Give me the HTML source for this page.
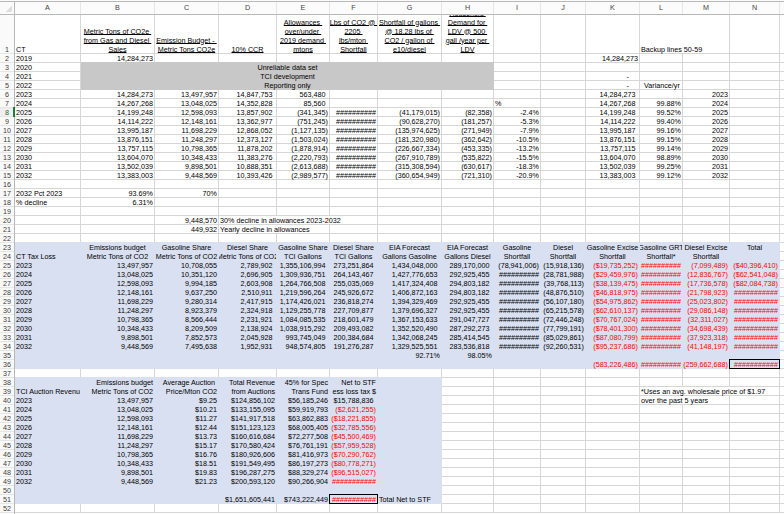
<!DOCTYPE html><html><head><meta charset="utf-8"><style>
html,body{margin:0;padding:0;background:#fff;width:784px;height:514px;overflow:hidden;position:relative}
body{font-family:"Liberation Sans",sans-serif;font-size:7.2px;color:#000}
.t{position:absolute;white-space:pre;line-height:9px;height:9px;display:flex;overflow:hidden;box-sizing:border-box}
.t span{flex:none}
.c{text-align:center}.r{text-align:right}.l{text-align:left}
.clip{overflow:hidden}
.red{color:#f00}
.u span{text-decoration:underline}
.h{position:absolute;color:#444;text-align:center;line-height:9px;white-space:pre}
.p{visibility:hidden}
.ul{text-decoration:underline;text-decoration-thickness:1px;text-underline-offset:0px}
svg{position:absolute;left:0;top:0}
</style></head><body>

<svg width="784" height="514" shape-rendering="crispEdges"><rect x="0" y="0" width="784" height="14" fill="#fbfbfb"/><rect x="0" y="0" width="14" height="514" fill="#fafafa"/><rect x="0" y="107" width="14" height="10" fill="#efefef"/><path d="M15 53.5H784M15 62.5H784M15 71.5H784M15 80.5H784M15 89.5H784M15 98.5H784M15 107.5H784M15 116.5H784M15 125.5H784M15 134.5H784M15 143.5H784M15 152.5H784M15 161.5H784M15 170.5H784M15 179.5H784M15 188.5H784M15 197.5H784M15 206.5H784M15 215.5H784M15 224.5H784M15 233.5H784M15 242.5H784M15 251.5H784M15 260.5H784M15 269.5H784M15 278.5H784M15 287.5H784M15 296.5H784M15 305.5H784M15 314.5H784M15 323.5H784M15 332.5H784M15 341.5H784M15 350.5H784M15 359.5H784M15 368.5H784M15 377.5H784M15 386.5H784M15 395.5H784M15 404.5H784M15 413.5H784M15 422.5H784M15 431.5H784M15 440.5H784M15 449.5H784M15 458.5H784M15 467.5H784M15 476.5H784M15 485.5H784M15 494.5H784M15 503.5H784M15 512.5H784M80.5 15V53M80.5 54V62M80.5 63V71M80.5 72V80M80.5 81V89M80.5 90V98M80.5 99V107M80.5 108V116M80.5 117V125M80.5 126V134M80.5 135V143M80.5 144V152M80.5 153V161M80.5 162V170M80.5 171V179M80.5 180V188M80.5 189V197M80.5 198V206M80.5 207V215M80.5 216V224M80.5 225V233M80.5 234V242M80.5 243V251M80.5 252V260M80.5 261V269M80.5 270V278M80.5 279V287M80.5 288V296M80.5 297V305M80.5 306V314M80.5 315V323M80.5 324V332M80.5 333V341M80.5 342V350M80.5 351V359M80.5 360V368M80.5 369V377M80.5 378V386M80.5 387V395M80.5 396V404M80.5 405V413M80.5 414V422M80.5 423V431M80.5 432V440M80.5 441V449M80.5 450V458M80.5 459V467M80.5 468V476M80.5 477V485M80.5 486V494M80.5 495V503M80.5 504V512M154.5 15V53M154.5 54V62M154.5 63V71M154.5 72V80M154.5 81V89M154.5 90V98M154.5 99V107M154.5 108V116M154.5 117V125M154.5 126V134M154.5 135V143M154.5 144V152M154.5 153V161M154.5 162V170M154.5 171V179M154.5 180V188M154.5 189V197M154.5 198V206M154.5 207V215M154.5 216V224M154.5 225V233M154.5 234V242M154.5 243V251M154.5 252V260M154.5 261V269M154.5 270V278M154.5 279V287M154.5 288V296M154.5 297V305M154.5 306V314M154.5 315V323M154.5 324V332M154.5 333V341M154.5 342V350M154.5 351V359M154.5 360V368M154.5 369V377M154.5 378V386M154.5 387V395M154.5 396V404M154.5 405V413M154.5 414V422M154.5 423V431M154.5 432V440M154.5 441V449M154.5 450V458M154.5 459V467M154.5 468V476M154.5 477V485M154.5 486V494M154.5 495V503M154.5 504V512M218.5 15V53M218.5 54V62M218.5 63V71M218.5 72V80M218.5 81V89M218.5 90V98M218.5 99V107M218.5 108V116M218.5 117V125M218.5 126V134M218.5 135V143M218.5 144V152M218.5 153V161M218.5 162V170M218.5 171V179M218.5 180V188M218.5 189V197M218.5 198V206M218.5 207V215M218.5 216V224M218.5 225V233M218.5 234V242M218.5 243V251M218.5 252V260M218.5 261V269M218.5 270V278M218.5 279V287M218.5 288V296M218.5 297V305M218.5 306V314M218.5 315V323M218.5 324V332M218.5 333V341M218.5 342V350M218.5 351V359M218.5 360V368M218.5 369V377M218.5 378V386M218.5 387V395M218.5 396V404M218.5 405V413M218.5 414V422M218.5 423V431M218.5 432V440M218.5 441V449M218.5 450V458M218.5 459V467M218.5 468V476M218.5 477V485M218.5 486V494M218.5 495V503M218.5 504V512M276.5 15V53M276.5 54V62M276.5 63V71M276.5 72V80M276.5 81V89M276.5 90V98M276.5 99V107M276.5 108V116M276.5 117V125M276.5 126V134M276.5 135V143M276.5 144V152M276.5 153V161M276.5 162V170M276.5 171V179M276.5 180V188M276.5 189V197M276.5 198V206M276.5 207V215M276.5 234V242M276.5 243V251M276.5 252V260M276.5 261V269M276.5 270V278M276.5 279V287M276.5 288V296M276.5 297V305M276.5 306V314M276.5 315V323M276.5 324V332M276.5 333V341M276.5 342V350M276.5 351V359M276.5 360V368M276.5 369V377M276.5 378V386M276.5 387V395M276.5 396V404M276.5 405V413M276.5 414V422M276.5 423V431M276.5 432V440M276.5 441V449M276.5 450V458M276.5 459V467M276.5 468V476M276.5 477V485M276.5 486V494M276.5 495V503M276.5 504V512M329.5 15V53M329.5 54V62M329.5 63V71M329.5 72V80M329.5 81V89M329.5 90V98M329.5 99V107M329.5 108V116M329.5 117V125M329.5 126V134M329.5 135V143M329.5 144V152M329.5 153V161M329.5 162V170M329.5 171V179M329.5 180V188M329.5 189V197M329.5 198V206M329.5 207V215M329.5 225V233M329.5 234V242M329.5 243V251M329.5 252V260M329.5 261V269M329.5 270V278M329.5 279V287M329.5 288V296M329.5 297V305M329.5 306V314M329.5 315V323M329.5 324V332M329.5 333V341M329.5 342V350M329.5 351V359M329.5 360V368M329.5 369V377M329.5 378V386M329.5 387V395M329.5 396V404M329.5 405V413M329.5 414V422M329.5 423V431M329.5 432V440M329.5 441V449M329.5 450V458M329.5 459V467M329.5 468V476M329.5 477V485M329.5 486V494M329.5 495V503M329.5 504V512M377.5 15V53M377.5 54V62M377.5 63V71M377.5 72V80M377.5 81V89M377.5 90V98M377.5 99V107M377.5 108V116M377.5 117V125M377.5 126V134M377.5 135V143M377.5 144V152M377.5 153V161M377.5 162V170M377.5 171V179M377.5 180V188M377.5 189V197M377.5 198V206M377.5 207V215M377.5 216V224M377.5 225V233M377.5 234V242M377.5 243V251M377.5 252V260M377.5 261V269M377.5 270V278M377.5 279V287M377.5 288V296M377.5 297V305M377.5 306V314M377.5 315V323M377.5 324V332M377.5 333V341M377.5 342V350M377.5 351V359M377.5 360V368M377.5 369V377M377.5 378V386M377.5 387V395M377.5 396V404M377.5 405V413M377.5 414V422M377.5 423V431M377.5 432V440M377.5 441V449M377.5 450V458M377.5 459V467M377.5 468V476M377.5 477V485M377.5 486V494M377.5 495V503M377.5 504V512M441.5 15V53M441.5 54V62M441.5 63V71M441.5 72V80M441.5 81V89M441.5 90V98M441.5 99V107M441.5 108V116M441.5 117V125M441.5 126V134M441.5 135V143M441.5 144V152M441.5 153V161M441.5 162V170M441.5 171V179M441.5 180V188M441.5 189V197M441.5 198V206M441.5 207V215M441.5 216V224M441.5 225V233M441.5 234V242M441.5 243V251M441.5 252V260M441.5 261V269M441.5 270V278M441.5 279V287M441.5 288V296M441.5 297V305M441.5 306V314M441.5 315V323M441.5 324V332M441.5 333V341M441.5 342V350M441.5 351V359M441.5 360V368M441.5 369V377M441.5 378V386M441.5 387V395M441.5 396V404M441.5 405V413M441.5 414V422M441.5 423V431M441.5 432V440M441.5 441V449M441.5 450V458M441.5 459V467M441.5 468V476M441.5 477V485M441.5 486V494M441.5 495V503M441.5 504V512M493.5 15V53M493.5 54V62M493.5 63V71M493.5 72V80M493.5 81V89M493.5 90V98M493.5 99V107M493.5 108V116M493.5 117V125M493.5 126V134M493.5 135V143M493.5 144V152M493.5 153V161M493.5 162V170M493.5 171V179M493.5 180V188M493.5 189V197M493.5 198V206M493.5 207V215M493.5 216V224M493.5 225V233M493.5 234V242M493.5 243V251M493.5 252V260M493.5 261V269M493.5 270V278M493.5 279V287M493.5 288V296M493.5 297V305M493.5 306V314M493.5 315V323M493.5 324V332M493.5 333V341M493.5 342V350M493.5 351V359M493.5 360V368M493.5 369V377M493.5 378V386M493.5 387V395M493.5 396V404M493.5 405V413M493.5 414V422M493.5 423V431M493.5 432V440M493.5 441V449M493.5 450V458M493.5 459V467M493.5 468V476M493.5 477V485M493.5 486V494M493.5 495V503M493.5 504V512M540.5 15V53M540.5 54V62M540.5 63V71M540.5 72V80M540.5 81V89M540.5 90V98M540.5 99V107M540.5 108V116M540.5 117V125M540.5 126V134M540.5 135V143M540.5 144V152M540.5 153V161M540.5 162V170M540.5 171V179M540.5 180V188M540.5 189V197M540.5 198V206M540.5 207V215M540.5 216V224M540.5 225V233M540.5 234V242M540.5 243V251M540.5 252V260M540.5 261V269M540.5 270V278M540.5 279V287M540.5 288V296M540.5 297V305M540.5 306V314M540.5 315V323M540.5 324V332M540.5 333V341M540.5 342V350M540.5 351V359M540.5 360V368M540.5 369V377M540.5 378V386M540.5 387V395M540.5 396V404M540.5 405V413M540.5 414V422M540.5 423V431M540.5 432V440M540.5 441V449M540.5 450V458M540.5 459V467M540.5 468V476M540.5 477V485M540.5 486V494M540.5 495V503M540.5 504V512M585.5 15V53M585.5 54V62M585.5 63V71M585.5 72V80M585.5 81V89M585.5 90V98M585.5 99V107M585.5 108V116M585.5 117V125M585.5 126V134M585.5 135V143M585.5 144V152M585.5 153V161M585.5 162V170M585.5 171V179M585.5 180V188M585.5 189V197M585.5 198V206M585.5 207V215M585.5 216V224M585.5 225V233M585.5 234V242M585.5 243V251M585.5 252V260M585.5 261V269M585.5 270V278M585.5 279V287M585.5 288V296M585.5 297V305M585.5 306V314M585.5 315V323M585.5 324V332M585.5 333V341M585.5 342V350M585.5 351V359M585.5 360V368M585.5 369V377M585.5 378V386M585.5 387V395M585.5 396V404M585.5 405V413M585.5 414V422M585.5 423V431M585.5 432V440M585.5 441V449M585.5 450V458M585.5 459V467M585.5 468V476M585.5 477V485M585.5 486V494M585.5 495V503M585.5 504V512M639.5 15V53M639.5 54V62M639.5 63V71M639.5 72V80M639.5 81V89M639.5 90V98M639.5 99V107M639.5 108V116M639.5 117V125M639.5 126V134M639.5 135V143M639.5 144V152M639.5 153V161M639.5 162V170M639.5 171V179M639.5 180V188M639.5 189V197M639.5 198V206M639.5 207V215M639.5 216V224M639.5 225V233M639.5 234V242M639.5 243V251M639.5 252V260M639.5 261V269M639.5 270V278M639.5 279V287M639.5 288V296M639.5 297V305M639.5 306V314M639.5 315V323M639.5 324V332M639.5 333V341M639.5 342V350M639.5 351V359M639.5 360V368M639.5 369V377M639.5 378V386M639.5 387V395M639.5 396V404M639.5 405V413M639.5 414V422M639.5 423V431M639.5 432V440M639.5 441V449M639.5 450V458M639.5 459V467M639.5 468V476M639.5 477V485M639.5 486V494M639.5 495V503M639.5 504V512M682.5 54V62M682.5 63V71M682.5 72V80M682.5 81V89M682.5 90V98M682.5 99V107M682.5 108V116M682.5 117V125M682.5 126V134M682.5 135V143M682.5 144V152M682.5 153V161M682.5 162V170M682.5 171V179M682.5 180V188M682.5 189V197M682.5 198V206M682.5 207V215M682.5 216V224M682.5 225V233M682.5 234V242M682.5 243V251M682.5 252V260M682.5 261V269M682.5 270V278M682.5 279V287M682.5 288V296M682.5 297V305M682.5 306V314M682.5 315V323M682.5 324V332M682.5 333V341M682.5 342V350M682.5 351V359M682.5 360V368M682.5 369V377M682.5 378V386M682.5 405V413M682.5 414V422M682.5 423V431M682.5 432V440M682.5 441V449M682.5 450V458M682.5 459V467M682.5 468V476M682.5 477V485M682.5 486V494M682.5 495V503M682.5 504V512M729.5 15V53M729.5 54V62M729.5 63V71M729.5 72V80M729.5 81V89M729.5 90V98M729.5 99V107M729.5 108V116M729.5 117V125M729.5 126V134M729.5 135V143M729.5 144V152M729.5 153V161M729.5 162V170M729.5 171V179M729.5 180V188M729.5 189V197M729.5 198V206M729.5 207V215M729.5 216V224M729.5 225V233M729.5 234V242M729.5 243V251M729.5 252V260M729.5 261V269M729.5 270V278M729.5 279V287M729.5 288V296M729.5 297V305M729.5 306V314M729.5 315V323M729.5 324V332M729.5 333V341M729.5 342V350M729.5 351V359M729.5 360V368M729.5 369V377M729.5 378V386M729.5 396V404M729.5 405V413M729.5 414V422M729.5 423V431M729.5 432V440M729.5 441V449M729.5 450V458M729.5 459V467M729.5 468V476M729.5 477V485M729.5 486V494M729.5 495V503M729.5 504V512M779.5 15V53M779.5 54V62M779.5 63V71M779.5 72V80M779.5 81V89M779.5 90V98M779.5 99V107M779.5 108V116M779.5 117V125M779.5 126V134M779.5 135V143M779.5 144V152M779.5 153V161M779.5 162V170M779.5 171V179M779.5 180V188M779.5 189V197M779.5 198V206M779.5 207V215M779.5 216V224M779.5 225V233M779.5 234V242M779.5 243V251M779.5 252V260M779.5 261V269M779.5 270V278M779.5 279V287M779.5 288V296M779.5 297V305M779.5 306V314M779.5 315V323M779.5 324V332M779.5 333V341M779.5 342V350M779.5 351V359M779.5 360V368M779.5 369V377M779.5 378V386M779.5 387V395M779.5 396V404M779.5 405V413M779.5 414V422M779.5 423V431M779.5 432V440M779.5 441V449M779.5 450V458M779.5 459V467M779.5 468V476M779.5 477V485M779.5 486V494M779.5 495V503M779.5 504V512" stroke="#d6d6d6" stroke-width="1" fill="none"/><path d="M80.5 2V14M154.5 2V14M218.5 2V14M276.5 2V14M329.5 2V14M377.5 2V14M441.5 2V14M493.5 2V14M540.5 2V14M585.5 2V14M639.5 2V14M682.5 2V14M729.5 2V14M779.5 2V14M0 53.5H14M0 62.5H14M0 71.5H14M0 80.5H14M0 89.5H14M0 98.5H14M0 107.5H14M0 116.5H14M0 125.5H14M0 134.5H14M0 143.5H14M0 152.5H14M0 161.5H14M0 170.5H14M0 179.5H14M0 188.5H14M0 197.5H14M0 206.5H14M0 215.5H14M0 224.5H14M0 233.5H14M0 242.5H14M0 251.5H14M0 260.5H14M0 269.5H14M0 278.5H14M0 287.5H14M0 296.5H14M0 305.5H14M0 314.5H14M0 323.5H14M0 332.5H14M0 341.5H14M0 350.5H14M0 359.5H14M0 368.5H14M0 377.5H14M0 386.5H14M0 395.5H14M0 404.5H14M0 413.5H14M0 422.5H14M0 431.5H14M0 440.5H14M0 449.5H14M0 458.5H14M0 467.5H14M0 476.5H14M0 485.5H14M0 494.5H14M0 503.5H14M0 512.5H14" stroke="#e6e6e6" stroke-width="1" fill="none"/><path d="M0 1.5H784M0 14.5H784M14.5 1V514" stroke="#b8b8b8" stroke-width="1" fill="none"/><path d="M6 12H12V5.5Z" fill="#dedede"/><rect x="81" y="62" width="413" height="28" fill="#c8c8c8"/><rect x="15" y="242" width="765" height="127" fill="#d9e0f1"/><rect x="15" y="377" width="427" height="127" fill="#d9e0f1"/><rect x="729.5" y="359.5" width="50" height="9" fill="none" stroke="#000" stroke-width="1"/><rect x="329.5" y="494.5" width="48" height="9" fill="none" stroke="#000" stroke-width="1"/><rect x="13" y="107" width="2" height="10" fill="#1d7a3b"/></svg>
<div class="h" style="left:15px;top:3px;width:65px">A</div>
<div class="h" style="left:81px;top:3px;width:73px">B</div>
<div class="h" style="left:155px;top:3px;width:63px">C</div>
<div class="h" style="left:219px;top:3px;width:57px">D</div>
<div class="h" style="left:277px;top:3px;width:52px">E</div>
<div class="h" style="left:330px;top:3px;width:47px">F</div>
<div class="h" style="left:378px;top:3px;width:63px">G</div>
<div class="h" style="left:442px;top:3px;width:51px">H</div>
<div class="h" style="left:494px;top:3px;width:46px">I</div>
<div class="h" style="left:541px;top:3px;width:44px">J</div>
<div class="h" style="left:586px;top:3px;width:53px">K</div>
<div class="h" style="left:640px;top:3px;width:42px">L</div>
<div class="h" style="left:683px;top:3px;width:46px">M</div>
<div class="h" style="left:730px;top:3px;width:49px">N</div>
<div class="h" style="left:780px;top:3px;width:50px">O</div>
<div class="h" style="left:0;top:45px;width:14px;color:#3c3c3c">1</div>
<div class="h" style="left:0;top:54px;width:14px;color:#3c3c3c">2</div>
<div class="h" style="left:0;top:63px;width:14px;color:#3c3c3c">3</div>
<div class="h" style="left:0;top:72px;width:14px;color:#3c3c3c">4</div>
<div class="h" style="left:0;top:81px;width:14px;color:#3c3c3c">5</div>
<div class="h" style="left:0;top:90px;width:14px;color:#3c3c3c">6</div>
<div class="h" style="left:0;top:99px;width:14px;color:#3c3c3c">7</div>
<div class="h" style="left:0;top:108px;width:14px;color:#1d6b35">8</div>
<div class="h" style="left:0;top:117px;width:14px;color:#3c3c3c">9</div>
<div class="h" style="left:0;top:126px;width:14px;color:#3c3c3c">10</div>
<div class="h" style="left:0;top:135px;width:14px;color:#3c3c3c">11</div>
<div class="h" style="left:0;top:144px;width:14px;color:#3c3c3c">12</div>
<div class="h" style="left:0;top:153px;width:14px;color:#3c3c3c">13</div>
<div class="h" style="left:0;top:162px;width:14px;color:#3c3c3c">14</div>
<div class="h" style="left:0;top:171px;width:14px;color:#3c3c3c">15</div>
<div class="h" style="left:0;top:180px;width:14px;color:#3c3c3c">16</div>
<div class="h" style="left:0;top:189px;width:14px;color:#3c3c3c">17</div>
<div class="h" style="left:0;top:198px;width:14px;color:#3c3c3c">18</div>
<div class="h" style="left:0;top:207px;width:14px;color:#3c3c3c">19</div>
<div class="h" style="left:0;top:216px;width:14px;color:#3c3c3c">20</div>
<div class="h" style="left:0;top:225px;width:14px;color:#3c3c3c">21</div>
<div class="h" style="left:0;top:234px;width:14px;color:#3c3c3c">22</div>
<div class="h" style="left:0;top:243px;width:14px;color:#3c3c3c">23</div>
<div class="h" style="left:0;top:252px;width:14px;color:#3c3c3c">24</div>
<div class="h" style="left:0;top:261px;width:14px;color:#3c3c3c">25</div>
<div class="h" style="left:0;top:270px;width:14px;color:#3c3c3c">26</div>
<div class="h" style="left:0;top:279px;width:14px;color:#3c3c3c">27</div>
<div class="h" style="left:0;top:288px;width:14px;color:#3c3c3c">28</div>
<div class="h" style="left:0;top:297px;width:14px;color:#3c3c3c">29</div>
<div class="h" style="left:0;top:306px;width:14px;color:#3c3c3c">30</div>
<div class="h" style="left:0;top:315px;width:14px;color:#3c3c3c">31</div>
<div class="h" style="left:0;top:324px;width:14px;color:#3c3c3c">32</div>
<div class="h" style="left:0;top:333px;width:14px;color:#3c3c3c">33</div>
<div class="h" style="left:0;top:342px;width:14px;color:#3c3c3c">34</div>
<div class="h" style="left:0;top:351px;width:14px;color:#3c3c3c">35</div>
<div class="h" style="left:0;top:360px;width:14px;color:#3c3c3c">36</div>
<div class="h" style="left:0;top:369px;width:14px;color:#3c3c3c">37</div>
<div class="h" style="left:0;top:378px;width:14px;color:#3c3c3c">38</div>
<div class="h" style="left:0;top:387px;width:14px;color:#3c3c3c">39</div>
<div class="h" style="left:0;top:396px;width:14px;color:#3c3c3c">40</div>
<div class="h" style="left:0;top:405px;width:14px;color:#3c3c3c">41</div>
<div class="h" style="left:0;top:414px;width:14px;color:#3c3c3c">42</div>
<div class="h" style="left:0;top:423px;width:14px;color:#3c3c3c">43</div>
<div class="h" style="left:0;top:432px;width:14px;color:#3c3c3c">44</div>
<div class="h" style="left:0;top:441px;width:14px;color:#3c3c3c">45</div>
<div class="h" style="left:0;top:450px;width:14px;color:#3c3c3c">46</div>
<div class="h" style="left:0;top:459px;width:14px;color:#3c3c3c">47</div>
<div class="h" style="left:0;top:468px;width:14px;color:#3c3c3c">48</div>
<div class="h" style="left:0;top:477px;width:14px;color:#3c3c3c">49</div>
<div class="h" style="left:0;top:486px;width:14px;color:#3c3c3c">50</div>
<div class="h" style="left:0;top:495px;width:14px;color:#3c3c3c">51</div>
<div class="h" style="left:0;top:504px;width:14px;color:#3c3c3c">52</div>
<div class="t" style="left:15px;top:45px;width:65px;justify-content:flex-start;padding-left:1px"><span>CT</span></div>
<div class="t" style="left:81px;top:27px;width:73px;justify-content:center"><span><span class="ul">Metric Tons of CO2e </span></span></div>
<div class="t" style="left:81px;top:36px;width:73px;justify-content:center"><span><span class="ul">from Gas and Diesel </span></span></div>
<div class="t" style="left:81px;top:45px;width:73px;justify-content:center"><span><span class="ul">Sales</span></span></div>
<div class="t" style="left:155px;top:36px;width:63px;justify-content:center"><span><span class="ul">Emission Budget - </span></span></div>
<div class="t" style="left:155px;top:45px;width:63px;justify-content:center"><span><span class="ul">Metric Tons CO2e</span></span></div>
<div class="t" style="left:219px;top:45px;width:57px;justify-content:center"><span><span class="ul">10% CCR</span></span></div>
<div class="t" style="left:277px;top:18px;width:52px;justify-content:center"><span><span class="ul">Allowances </span></span></div>
<div class="t" style="left:277px;top:27px;width:52px;justify-content:center"><span><span class="ul">over/under </span></span></div>
<div class="t" style="left:277px;top:36px;width:52px;justify-content:center"><span><span class="ul">2019 demand </span></span></div>
<div class="t" style="left:277px;top:45px;width:52px;justify-content:center"><span><span class="ul">mtons</span></span></div>
<div class="t" style="left:330px;top:18px;width:47px;justify-content:center"><span><span class="ul">Lbs of CO2 @ </span></span></div>
<div class="t" style="left:330px;top:27px;width:47px;justify-content:center"><span><span class="ul">2205 </span></span></div>
<div class="t" style="left:330px;top:36px;width:47px;justify-content:center"><span><span class="ul">lbs/mton </span></span></div>
<div class="t" style="left:330px;top:45px;width:47px;justify-content:center"><span><span class="ul">Shortfall</span></span></div>
<div class="t" style="left:378px;top:18px;width:63px;justify-content:center"><span><span class="ul">Shortfall of gallons </span></span></div>
<div class="t" style="left:378px;top:27px;width:63px;justify-content:center"><span><span class="ul">@ 18.28 lbs of </span></span></div>
<div class="t" style="left:378px;top:36px;width:63px;justify-content:center"><span><span class="ul">CO2 / gallon of </span></span></div>
<div class="t" style="left:378px;top:45px;width:63px;justify-content:center"><span><span class="ul">e10/diesel</span></span></div>
<div style="position:absolute;left:0;top:15px;width:784px;height:38px;overflow:hidden"><div style="position:absolute;left:0;top:-15px"><div class="t" style="left:442px;top:9px;width:51px;justify-content:center"><span><span class="ul">Household </span></span></div></div></div>
<div class="t" style="left:442px;top:18px;width:51px;justify-content:center"><span><span class="ul">Demand for </span></span></div>
<div class="t" style="left:442px;top:27px;width:51px;justify-content:center"><span><span class="ul">LDV @ 500 </span></span></div>
<div class="t" style="left:442px;top:36px;width:51px;justify-content:center"><span><span class="ul">gall /year per </span></span></div>
<div class="t" style="left:442px;top:45px;width:51px;justify-content:center"><span><span class="ul">LDV</span></span></div>
<div class="t" style="left:640px;top:45px;width:42px;justify-content:flex-start;padding-left:1px;overflow:visible"><span>Backup lines 50-59</span></div>
<div class="t" style="left:15px;top:54px;width:65px;justify-content:flex-start;padding-left:1px"><span>2019</span></div>
<div class="t" style="left:81px;top:54px;width:73px;justify-content:flex-end;padding-right:1px"><span>14,284,273</span></div>
<div class="t" style="left:586px;top:54px;width:53px;justify-content:flex-end;padding-right:1px"><span>14,284,273</span></div>
<div class="t" style="left:15px;top:63px;width:65px;justify-content:flex-start;padding-left:1px"><span>2020</span></div>
<div class="t" style="left:15px;top:72px;width:65px;justify-content:flex-start;padding-left:1px"><span>2021</span></div>
<div class="t" style="left:15px;top:81px;width:65px;justify-content:flex-start;padding-left:1px"><span>2022</span></div>
<div class="t" style="left:586px;top:72px;width:53px;justify-content:flex-end;padding-right:10px"><span>-</span></div>
<div class="t" style="left:586px;top:81px;width:53px;justify-content:flex-end;padding-right:10px"><span>-</span></div>
<div class="t" style="left:640px;top:81px;width:42px;justify-content:flex-start;padding-left:4px"><span>Variance/yr</span></div>
<div class="t" style="left:15px;top:90px;width:65px;justify-content:flex-start;padding-left:1px"><span>2023</span></div>
<div class="t" style="left:81px;top:90px;width:73px;justify-content:flex-end;padding-right:1px"><span>14,284,273</span></div>
<div class="t" style="left:155px;top:90px;width:63px;justify-content:flex-end;padding-right:1px"><span>13,497,957</span></div>
<div class="t" style="left:219px;top:90px;width:57px;justify-content:flex-end;padding-right:1px"><span>14,847,753<span class="p">)</span></span></div>
<div class="t" style="left:277px;top:90px;width:52px;justify-content:flex-end;padding-right:1px"><span>563,480<span class="p">)</span></span></div>
<div class="t" style="left:586px;top:90px;width:53px;justify-content:flex-end;padding-right:1px"><span>14,284,273<span class="p">)</span></span></div>
<div class="t" style="left:683px;top:90px;width:46px;justify-content:flex-end;padding-right:1px"><span>2023</span></div>
<div class="t" style="left:15px;top:99px;width:65px;justify-content:flex-start;padding-left:1px"><span>2024</span></div>
<div class="t" style="left:81px;top:99px;width:73px;justify-content:flex-end;padding-right:1px"><span>14,267,268</span></div>
<div class="t" style="left:155px;top:99px;width:63px;justify-content:flex-end;padding-right:1px"><span>13,048,025</span></div>
<div class="t" style="left:219px;top:99px;width:57px;justify-content:flex-end;padding-right:1px"><span>14,352,828<span class="p">)</span></span></div>
<div class="t" style="left:277px;top:99px;width:52px;justify-content:flex-end;padding-right:1px"><span>85,560<span class="p">)</span></span></div>
<div class="t" style="left:586px;top:99px;width:53px;justify-content:flex-end;padding-right:1px"><span>14,267,268<span class="p">)</span></span></div>
<div class="t" style="left:683px;top:99px;width:46px;justify-content:flex-end;padding-right:1px"><span>2024</span></div>
<div class="t" style="left:640px;top:99px;width:42px;justify-content:flex-end;padding-right:1px"><span>99.88%</span></div>
<div class="t" style="left:15px;top:108px;width:65px;justify-content:flex-start;padding-left:1px"><span>2025</span></div>
<div class="t" style="left:81px;top:108px;width:73px;justify-content:flex-end;padding-right:1px"><span>14,199,248</span></div>
<div class="t" style="left:155px;top:108px;width:63px;justify-content:flex-end;padding-right:1px"><span>12,598,093</span></div>
<div class="t" style="left:219px;top:108px;width:57px;justify-content:flex-end;padding-right:1px"><span>13,857,902<span class="p">)</span></span></div>
<div class="t" style="left:277px;top:108px;width:52px;justify-content:flex-end;padding-right:1px"><span>(341,345)</span></div>
<div class="t" style="left:586px;top:108px;width:53px;justify-content:flex-end;padding-right:1px"><span>14,199,248<span class="p">)</span></span></div>
<div class="t" style="left:683px;top:108px;width:46px;justify-content:flex-end;padding-right:1px"><span>2025</span></div>
<div class="t" style="left:640px;top:108px;width:42px;justify-content:flex-end;padding-right:1px"><span>99.52%</span></div>
<div class="t" style="left:330px;top:108px;width:47px;justify-content:flex-end;padding-right:1px"><span>##########</span></div>
<div class="t" style="left:378px;top:108px;width:63px;justify-content:flex-end;padding-right:1px"><span>(41,179,015)</span></div>
<div class="t" style="left:442px;top:108px;width:51px;justify-content:flex-end;padding-right:1px"><span>(82,358)</span></div>
<div class="t" style="left:494px;top:108px;width:46px;justify-content:flex-end;padding-right:1px"><span>-2.4%</span></div>
<div class="t" style="left:15px;top:117px;width:65px;justify-content:flex-start;padding-left:1px"><span>2026</span></div>
<div class="t" style="left:81px;top:117px;width:73px;justify-content:flex-end;padding-right:1px"><span>14,114,222</span></div>
<div class="t" style="left:155px;top:117px;width:63px;justify-content:flex-end;padding-right:1px"><span>12,148,161</span></div>
<div class="t" style="left:219px;top:117px;width:57px;justify-content:flex-end;padding-right:1px"><span>13,362,977<span class="p">)</span></span></div>
<div class="t" style="left:277px;top:117px;width:52px;justify-content:flex-end;padding-right:1px"><span>(751,245)</span></div>
<div class="t" style="left:586px;top:117px;width:53px;justify-content:flex-end;padding-right:1px"><span>14,114,222<span class="p">)</span></span></div>
<div class="t" style="left:683px;top:117px;width:46px;justify-content:flex-end;padding-right:1px"><span>2026</span></div>
<div class="t" style="left:640px;top:117px;width:42px;justify-content:flex-end;padding-right:1px"><span>99.40%</span></div>
<div class="t" style="left:330px;top:117px;width:47px;justify-content:flex-end;padding-right:1px"><span>##########</span></div>
<div class="t" style="left:378px;top:117px;width:63px;justify-content:flex-end;padding-right:1px"><span>(90,628,270)</span></div>
<div class="t" style="left:442px;top:117px;width:51px;justify-content:flex-end;padding-right:1px"><span>(181,257)</span></div>
<div class="t" style="left:494px;top:117px;width:46px;justify-content:flex-end;padding-right:1px"><span>-5.3%</span></div>
<div class="t" style="left:15px;top:126px;width:65px;justify-content:flex-start;padding-left:1px"><span>2027</span></div>
<div class="t" style="left:81px;top:126px;width:73px;justify-content:flex-end;padding-right:1px"><span>13,995,187</span></div>
<div class="t" style="left:155px;top:126px;width:63px;justify-content:flex-end;padding-right:1px"><span>11,698,229</span></div>
<div class="t" style="left:219px;top:126px;width:57px;justify-content:flex-end;padding-right:1px"><span>12,868,052<span class="p">)</span></span></div>
<div class="t" style="left:277px;top:126px;width:52px;justify-content:flex-end;padding-right:1px"><span>(1,127,135)</span></div>
<div class="t" style="left:586px;top:126px;width:53px;justify-content:flex-end;padding-right:1px"><span>13,995,187<span class="p">)</span></span></div>
<div class="t" style="left:683px;top:126px;width:46px;justify-content:flex-end;padding-right:1px"><span>2027</span></div>
<div class="t" style="left:640px;top:126px;width:42px;justify-content:flex-end;padding-right:1px"><span>99.16%</span></div>
<div class="t" style="left:330px;top:126px;width:47px;justify-content:flex-end;padding-right:1px"><span>##########</span></div>
<div class="t" style="left:378px;top:126px;width:63px;justify-content:flex-end;padding-right:1px"><span>(135,974,625)</span></div>
<div class="t" style="left:442px;top:126px;width:51px;justify-content:flex-end;padding-right:1px"><span>(271,949)</span></div>
<div class="t" style="left:494px;top:126px;width:46px;justify-content:flex-end;padding-right:1px"><span>-7.9%</span></div>
<div class="t" style="left:15px;top:135px;width:65px;justify-content:flex-start;padding-left:1px"><span>2028</span></div>
<div class="t" style="left:81px;top:135px;width:73px;justify-content:flex-end;padding-right:1px"><span>13,876,151</span></div>
<div class="t" style="left:155px;top:135px;width:63px;justify-content:flex-end;padding-right:1px"><span>11,248,297</span></div>
<div class="t" style="left:219px;top:135px;width:57px;justify-content:flex-end;padding-right:1px"><span>12,373,127<span class="p">)</span></span></div>
<div class="t" style="left:277px;top:135px;width:52px;justify-content:flex-end;padding-right:1px"><span>(1,503,024)</span></div>
<div class="t" style="left:586px;top:135px;width:53px;justify-content:flex-end;padding-right:1px"><span>13,876,151<span class="p">)</span></span></div>
<div class="t" style="left:683px;top:135px;width:46px;justify-content:flex-end;padding-right:1px"><span>2028</span></div>
<div class="t" style="left:640px;top:135px;width:42px;justify-content:flex-end;padding-right:1px"><span>99.15%</span></div>
<div class="t" style="left:330px;top:135px;width:47px;justify-content:flex-end;padding-right:1px"><span>##########</span></div>
<div class="t" style="left:378px;top:135px;width:63px;justify-content:flex-end;padding-right:1px"><span>(181,320,980)</span></div>
<div class="t" style="left:442px;top:135px;width:51px;justify-content:flex-end;padding-right:1px"><span>(362,642)</span></div>
<div class="t" style="left:494px;top:135px;width:46px;justify-content:flex-end;padding-right:1px"><span>-10.5%</span></div>
<div class="t" style="left:15px;top:144px;width:65px;justify-content:flex-start;padding-left:1px"><span>2029</span></div>
<div class="t" style="left:81px;top:144px;width:73px;justify-content:flex-end;padding-right:1px"><span>13,757,115</span></div>
<div class="t" style="left:155px;top:144px;width:63px;justify-content:flex-end;padding-right:1px"><span>10,798,365</span></div>
<div class="t" style="left:219px;top:144px;width:57px;justify-content:flex-end;padding-right:1px"><span>11,878,202<span class="p">)</span></span></div>
<div class="t" style="left:277px;top:144px;width:52px;justify-content:flex-end;padding-right:1px"><span>(1,878,914)</span></div>
<div class="t" style="left:586px;top:144px;width:53px;justify-content:flex-end;padding-right:1px"><span>13,757,115<span class="p">)</span></span></div>
<div class="t" style="left:683px;top:144px;width:46px;justify-content:flex-end;padding-right:1px"><span>2029</span></div>
<div class="t" style="left:640px;top:144px;width:42px;justify-content:flex-end;padding-right:1px"><span>99.14%</span></div>
<div class="t" style="left:330px;top:144px;width:47px;justify-content:flex-end;padding-right:1px"><span>##########</span></div>
<div class="t" style="left:378px;top:144px;width:63px;justify-content:flex-end;padding-right:1px"><span>(226,667,334)</span></div>
<div class="t" style="left:442px;top:144px;width:51px;justify-content:flex-end;padding-right:1px"><span>(453,335)</span></div>
<div class="t" style="left:494px;top:144px;width:46px;justify-content:flex-end;padding-right:1px"><span>-13.2%</span></div>
<div class="t" style="left:15px;top:153px;width:65px;justify-content:flex-start;padding-left:1px"><span>2030</span></div>
<div class="t" style="left:81px;top:153px;width:73px;justify-content:flex-end;padding-right:1px"><span>13,604,070</span></div>
<div class="t" style="left:155px;top:153px;width:63px;justify-content:flex-end;padding-right:1px"><span>10,348,433</span></div>
<div class="t" style="left:219px;top:153px;width:57px;justify-content:flex-end;padding-right:1px"><span>11,383,276<span class="p">)</span></span></div>
<div class="t" style="left:277px;top:153px;width:52px;justify-content:flex-end;padding-right:1px"><span>(2,220,793)</span></div>
<div class="t" style="left:586px;top:153px;width:53px;justify-content:flex-end;padding-right:1px"><span>13,604,070<span class="p">)</span></span></div>
<div class="t" style="left:683px;top:153px;width:46px;justify-content:flex-end;padding-right:1px"><span>2030</span></div>
<div class="t" style="left:640px;top:153px;width:42px;justify-content:flex-end;padding-right:1px"><span>98.89%</span></div>
<div class="t" style="left:330px;top:153px;width:47px;justify-content:flex-end;padding-right:1px"><span>##########</span></div>
<div class="t" style="left:378px;top:153px;width:63px;justify-content:flex-end;padding-right:1px"><span>(267,910,789)</span></div>
<div class="t" style="left:442px;top:153px;width:51px;justify-content:flex-end;padding-right:1px"><span>(535,822)</span></div>
<div class="t" style="left:494px;top:153px;width:46px;justify-content:flex-end;padding-right:1px"><span>-15.5%</span></div>
<div class="t" style="left:15px;top:162px;width:65px;justify-content:flex-start;padding-left:1px"><span>2031</span></div>
<div class="t" style="left:81px;top:162px;width:73px;justify-content:flex-end;padding-right:1px"><span>13,502,039</span></div>
<div class="t" style="left:155px;top:162px;width:63px;justify-content:flex-end;padding-right:1px"><span>9,898,501</span></div>
<div class="t" style="left:219px;top:162px;width:57px;justify-content:flex-end;padding-right:1px"><span>10,888,351<span class="p">)</span></span></div>
<div class="t" style="left:277px;top:162px;width:52px;justify-content:flex-end;padding-right:1px"><span>(2,613,688)</span></div>
<div class="t" style="left:586px;top:162px;width:53px;justify-content:flex-end;padding-right:1px"><span>13,502,039<span class="p">)</span></span></div>
<div class="t" style="left:683px;top:162px;width:46px;justify-content:flex-end;padding-right:1px"><span>2031</span></div>
<div class="t" style="left:640px;top:162px;width:42px;justify-content:flex-end;padding-right:1px"><span>99.25%</span></div>
<div class="t" style="left:330px;top:162px;width:47px;justify-content:flex-end;padding-right:1px"><span>##########</span></div>
<div class="t" style="left:378px;top:162px;width:63px;justify-content:flex-end;padding-right:1px"><span>(315,308,594)</span></div>
<div class="t" style="left:442px;top:162px;width:51px;justify-content:flex-end;padding-right:1px"><span>(630,617)</span></div>
<div class="t" style="left:494px;top:162px;width:46px;justify-content:flex-end;padding-right:1px"><span>-18.3%</span></div>
<div class="t" style="left:15px;top:171px;width:65px;justify-content:flex-start;padding-left:1px"><span>2032</span></div>
<div class="t" style="left:81px;top:171px;width:73px;justify-content:flex-end;padding-right:1px"><span>13,383,003</span></div>
<div class="t" style="left:155px;top:171px;width:63px;justify-content:flex-end;padding-right:1px"><span>9,448,569</span></div>
<div class="t" style="left:219px;top:171px;width:57px;justify-content:flex-end;padding-right:1px"><span>10,393,426<span class="p">)</span></span></div>
<div class="t" style="left:277px;top:171px;width:52px;justify-content:flex-end;padding-right:1px"><span>(2,989,577)</span></div>
<div class="t" style="left:586px;top:171px;width:53px;justify-content:flex-end;padding-right:1px"><span>13,383,003<span class="p">)</span></span></div>
<div class="t" style="left:683px;top:171px;width:46px;justify-content:flex-end;padding-right:1px"><span>2032</span></div>
<div class="t" style="left:640px;top:171px;width:42px;justify-content:flex-end;padding-right:1px"><span>99.12%</span></div>
<div class="t" style="left:330px;top:171px;width:47px;justify-content:flex-end;padding-right:1px"><span>##########</span></div>
<div class="t" style="left:378px;top:171px;width:63px;justify-content:flex-end;padding-right:1px"><span>(360,654,949)</span></div>
<div class="t" style="left:442px;top:171px;width:51px;justify-content:flex-end;padding-right:1px"><span>(721,310)</span></div>
<div class="t" style="left:494px;top:171px;width:46px;justify-content:flex-end;padding-right:1px"><span>-20.9%</span></div>
<div class="t" style="left:494px;top:99px;width:46px;justify-content:flex-start;padding-left:1px"><span>%</span></div>
<div class="t" style="left:15px;top:189px;width:65px;justify-content:flex-start;padding-left:1px"><span>2032 Pct 2023</span></div>
<div class="t" style="left:81px;top:189px;width:73px;justify-content:flex-end;padding-right:1px"><span>93.69%</span></div>
<div class="t" style="left:155px;top:189px;width:63px;justify-content:flex-end;padding-right:1px"><span>70%</span></div>
<div class="t" style="left:15px;top:198px;width:65px;justify-content:flex-start;padding-left:1px"><span>% decline</span></div>
<div class="t" style="left:81px;top:198px;width:73px;justify-content:flex-end;padding-right:1px"><span>6.31%</span></div>
<div class="t" style="left:155px;top:216px;width:63px;justify-content:flex-end;padding-right:1px"><span>9,448,570</span></div>
<div class="t" style="left:219px;top:216px;width:57px;justify-content:flex-start;padding-left:1px;overflow:visible"><span>30% decline in allowances 2023-2032</span></div>
<div class="t" style="left:155px;top:225px;width:63px;justify-content:flex-end;padding-right:1px"><span>449,932</span></div>
<div class="t" style="left:219px;top:225px;width:57px;justify-content:flex-start;padding-left:1px;overflow:visible"><span>Yearly decline in allowances</span></div>
<div class="t" style="left:81px;top:63px;width:413px;justify-content:center"><span>Unreliable data set</span></div>
<div class="t" style="left:81px;top:72px;width:413px;justify-content:center"><span>TCI development</span></div>
<div class="t" style="left:81px;top:81px;width:413px;justify-content:center"><span>Reporting only</span></div>
<div class="t" style="left:81px;top:243px;width:73px;justify-content:center"><span>Emissions budget</span></div>
<div class="t" style="left:155px;top:243px;width:63px;justify-content:center"><span>Gasoline Share</span></div>
<div class="t" style="left:219px;top:243px;width:57px;justify-content:center"><span>Diesel Share</span></div>
<div class="t" style="left:277px;top:243px;width:52px;justify-content:center"><span>Gasoline Share</span></div>
<div class="t" style="left:330px;top:243px;width:47px;justify-content:center"><span>Diesel Share</span></div>
<div class="t" style="left:378px;top:243px;width:63px;justify-content:center"><span>EIA Forecast</span></div>
<div class="t" style="left:442px;top:243px;width:51px;justify-content:center"><span>EIA Forecast</span></div>
<div class="t" style="left:494px;top:243px;width:46px;justify-content:center"><span>Gasoline</span></div>
<div class="t" style="left:541px;top:243px;width:44px;justify-content:center"><span>Diesel</span></div>
<div class="t" style="left:586px;top:243px;width:53px;justify-content:center"><span>Gasoline Excise</span></div>
<div class="t" style="left:640px;top:243px;width:42px;justify-content:center"><span>Gasoline GRT</span></div>
<div class="t" style="left:683px;top:243px;width:46px;justify-content:center"><span>Diesel Excise</span></div>
<div class="t" style="left:730px;top:243px;width:49px;justify-content:center"><span>Total</span></div>
<div class="t" style="left:81px;top:252px;width:73px;justify-content:center"><span>Metric Tons of CO2</span></div>
<div class="t" style="left:155px;top:252px;width:63px;justify-content:center"><span>Metric Tons of CO2</span></div>
<div class="t" style="left:219px;top:252px;width:57px;justify-content:center"><span>Metric Tons of CO2</span></div>
<div class="t" style="left:277px;top:252px;width:52px;justify-content:center"><span>TCI Gallons</span></div>
<div class="t" style="left:330px;top:252px;width:47px;justify-content:center"><span>TCI Gallons</span></div>
<div class="t" style="left:378px;top:252px;width:63px;justify-content:center"><span>Gallons Gasoline</span></div>
<div class="t" style="left:442px;top:252px;width:51px;justify-content:center"><span>Gallons Diesel</span></div>
<div class="t" style="left:494px;top:252px;width:46px;justify-content:center"><span>Shortfall</span></div>
<div class="t" style="left:541px;top:252px;width:44px;justify-content:center"><span>Shortfall</span></div>
<div class="t" style="left:586px;top:252px;width:53px;justify-content:center"><span>Shortfall</span></div>
<div class="t" style="left:640px;top:252px;width:42px;justify-content:center"><span>Shortfall*</span></div>
<div class="t" style="left:683px;top:252px;width:46px;justify-content:center"><span>Shortfall</span></div>
<div class="t" style="left:15px;top:252px;width:65px;justify-content:flex-start;padding-left:1px"><span>CT Tax Loss</span></div>
<div class="t" style="left:15px;top:261px;width:65px;justify-content:flex-start;padding-left:1px"><span>2023</span></div>
<div class="t" style="left:81px;top:261px;width:73px;justify-content:flex-end;padding-right:1px"><span>13,497,957</span></div>
<div class="t" style="left:155px;top:261px;width:63px;justify-content:flex-end;padding-right:1px"><span>10,708,055</span></div>
<div class="t" style="left:219px;top:261px;width:57px;justify-content:flex-end;padding-right:1px"><span>2,789,902<span class="p">)</span></span></div>
<div class="t" style="left:277px;top:261px;width:52px;justify-content:flex-end;padding-right:1px"><span>1,355,106,994<span class="p">)</span></span></div>
<div class="t" style="left:330px;top:261px;width:47px;justify-content:flex-end;padding-right:1px"><span>273,251,864<span class="p">)</span></span></div>
<div class="t" style="left:378px;top:261px;width:63px;justify-content:flex-end;padding-right:1px"><span>1,434,048,000<span class="p">)</span></span></div>
<div class="t" style="left:442px;top:261px;width:51px;justify-content:flex-end;padding-right:1px"><span>289,170,000<span class="p">)</span></span></div>
<div class="t" style="left:494px;top:261px;width:46px;justify-content:flex-end;padding-right:1px"><span>(78,941,006)</span></div>
<div class="t" style="left:541px;top:261px;width:44px;justify-content:flex-end;padding-right:1px"><span>(15,918,136)</span></div>
<div class="t red" style="left:586px;top:261px;width:53px;justify-content:flex-end;padding-right:1px"><span>($19,735,252)</span></div>
<div class="t red" style="left:640px;top:261px;width:42px;justify-content:flex-end;padding-right:1px"><span>##########</span></div>
<div class="t red" style="left:683px;top:261px;width:46px;justify-content:flex-end;padding-right:1px"><span>(7,099,489)</span></div>
<div class="t red" style="left:730px;top:261px;width:49px;justify-content:flex-end;padding-right:1px"><span>($40,396,410)</span></div>
<div class="t" style="left:15px;top:270px;width:65px;justify-content:flex-start;padding-left:1px"><span>2024</span></div>
<div class="t" style="left:81px;top:270px;width:73px;justify-content:flex-end;padding-right:1px"><span>13,048,025</span></div>
<div class="t" style="left:155px;top:270px;width:63px;justify-content:flex-end;padding-right:1px"><span>10,351,120</span></div>
<div class="t" style="left:219px;top:270px;width:57px;justify-content:flex-end;padding-right:1px"><span>2,696,905<span class="p">)</span></span></div>
<div class="t" style="left:277px;top:270px;width:52px;justify-content:flex-end;padding-right:1px"><span>1,309,936,751<span class="p">)</span></span></div>
<div class="t" style="left:330px;top:270px;width:47px;justify-content:flex-end;padding-right:1px"><span>264,143,467<span class="p">)</span></span></div>
<div class="t" style="left:378px;top:270px;width:63px;justify-content:flex-end;padding-right:1px"><span>1,427,776,653<span class="p">)</span></span></div>
<div class="t" style="left:442px;top:270px;width:51px;justify-content:flex-end;padding-right:1px"><span>292,925,455<span class="p">)</span></span></div>
<div class="t" style="left:494px;top:270px;width:46px;justify-content:flex-end;padding-right:1px"><span>##########</span></div>
<div class="t" style="left:541px;top:270px;width:44px;justify-content:flex-end;padding-right:1px"><span>(28,781,988)</span></div>
<div class="t red" style="left:586px;top:270px;width:53px;justify-content:flex-end;padding-right:1px"><span>($29,459,976)</span></div>
<div class="t red" style="left:640px;top:270px;width:42px;justify-content:flex-end;padding-right:1px"><span>##########</span></div>
<div class="t red" style="left:683px;top:270px;width:46px;justify-content:flex-end;padding-right:1px"><span>(12,836,767)</span></div>
<div class="t red" style="left:730px;top:270px;width:49px;justify-content:flex-end;padding-right:1px"><span>($62,541,048)</span></div>
<div class="t" style="left:15px;top:279px;width:65px;justify-content:flex-start;padding-left:1px"><span>2025</span></div>
<div class="t" style="left:81px;top:279px;width:73px;justify-content:flex-end;padding-right:1px"><span>12,598,093</span></div>
<div class="t" style="left:155px;top:279px;width:63px;justify-content:flex-end;padding-right:1px"><span>9,994,185</span></div>
<div class="t" style="left:219px;top:279px;width:57px;justify-content:flex-end;padding-right:1px"><span>2,603,908<span class="p">)</span></span></div>
<div class="t" style="left:277px;top:279px;width:52px;justify-content:flex-end;padding-right:1px"><span>1,264,766,508<span class="p">)</span></span></div>
<div class="t" style="left:330px;top:279px;width:47px;justify-content:flex-end;padding-right:1px"><span>255,035,069<span class="p">)</span></span></div>
<div class="t" style="left:378px;top:279px;width:63px;justify-content:flex-end;padding-right:1px"><span>1,417,324,408<span class="p">)</span></span></div>
<div class="t" style="left:442px;top:279px;width:51px;justify-content:flex-end;padding-right:1px"><span>294,803,182<span class="p">)</span></span></div>
<div class="t" style="left:494px;top:279px;width:46px;justify-content:flex-end;padding-right:1px"><span>##########</span></div>
<div class="t" style="left:541px;top:279px;width:44px;justify-content:flex-end;padding-right:1px"><span>(39,768,113)</span></div>
<div class="t red" style="left:586px;top:279px;width:53px;justify-content:flex-end;padding-right:1px"><span>($38,139,475)</span></div>
<div class="t red" style="left:640px;top:279px;width:42px;justify-content:flex-end;padding-right:1px"><span>##########</span></div>
<div class="t red" style="left:683px;top:279px;width:46px;justify-content:flex-end;padding-right:1px"><span>(17,736,578)</span></div>
<div class="t red" style="left:730px;top:279px;width:49px;justify-content:flex-end;padding-right:1px"><span>($82,084,738)</span></div>
<div class="t" style="left:15px;top:288px;width:65px;justify-content:flex-start;padding-left:1px"><span>2026</span></div>
<div class="t" style="left:81px;top:288px;width:73px;justify-content:flex-end;padding-right:1px"><span>12,148,161</span></div>
<div class="t" style="left:155px;top:288px;width:63px;justify-content:flex-end;padding-right:1px"><span>9,637,250</span></div>
<div class="t" style="left:219px;top:288px;width:57px;justify-content:flex-end;padding-right:1px"><span>2,510,911<span class="p">)</span></span></div>
<div class="t" style="left:277px;top:288px;width:52px;justify-content:flex-end;padding-right:1px"><span>1,219,596,264<span class="p">)</span></span></div>
<div class="t" style="left:330px;top:288px;width:47px;justify-content:flex-end;padding-right:1px"><span>245,926,672<span class="p">)</span></span></div>
<div class="t" style="left:378px;top:288px;width:63px;justify-content:flex-end;padding-right:1px"><span>1,406,872,163<span class="p">)</span></span></div>
<div class="t" style="left:442px;top:288px;width:51px;justify-content:flex-end;padding-right:1px"><span>294,803,182<span class="p">)</span></span></div>
<div class="t" style="left:494px;top:288px;width:46px;justify-content:flex-end;padding-right:1px"><span>##########</span></div>
<div class="t" style="left:541px;top:288px;width:44px;justify-content:flex-end;padding-right:1px"><span>(48,876,510)</span></div>
<div class="t red" style="left:586px;top:288px;width:53px;justify-content:flex-end;padding-right:1px"><span>($46,818,975)</span></div>
<div class="t red" style="left:640px;top:288px;width:42px;justify-content:flex-end;padding-right:1px"><span>##########</span></div>
<div class="t red" style="left:683px;top:288px;width:46px;justify-content:flex-end;padding-right:1px"><span>(21,798,923)</span></div>
<div class="t red" style="left:730px;top:288px;width:49px;justify-content:flex-end;padding-right:1px"><span>###########</span></div>
<div class="t" style="left:15px;top:297px;width:65px;justify-content:flex-start;padding-left:1px"><span>2027</span></div>
<div class="t" style="left:81px;top:297px;width:73px;justify-content:flex-end;padding-right:1px"><span>11,698,229</span></div>
<div class="t" style="left:155px;top:297px;width:63px;justify-content:flex-end;padding-right:1px"><span>9,280,314</span></div>
<div class="t" style="left:219px;top:297px;width:57px;justify-content:flex-end;padding-right:1px"><span>2,417,915<span class="p">)</span></span></div>
<div class="t" style="left:277px;top:297px;width:52px;justify-content:flex-end;padding-right:1px"><span>1,174,426,021<span class="p">)</span></span></div>
<div class="t" style="left:330px;top:297px;width:47px;justify-content:flex-end;padding-right:1px"><span>236,818,274<span class="p">)</span></span></div>
<div class="t" style="left:378px;top:297px;width:63px;justify-content:flex-end;padding-right:1px"><span>1,394,329,469<span class="p">)</span></span></div>
<div class="t" style="left:442px;top:297px;width:51px;justify-content:flex-end;padding-right:1px"><span>292,925,455<span class="p">)</span></span></div>
<div class="t" style="left:494px;top:297px;width:46px;justify-content:flex-end;padding-right:1px"><span>##########</span></div>
<div class="t" style="left:541px;top:297px;width:44px;justify-content:flex-end;padding-right:1px"><span>(56,107,180)</span></div>
<div class="t red" style="left:586px;top:297px;width:53px;justify-content:flex-end;padding-right:1px"><span>($54,975,862)</span></div>
<div class="t red" style="left:640px;top:297px;width:42px;justify-content:flex-end;padding-right:1px"><span>##########</span></div>
<div class="t red" style="left:683px;top:297px;width:46px;justify-content:flex-end;padding-right:1px"><span>(25,023,802)</span></div>
<div class="t red" style="left:730px;top:297px;width:49px;justify-content:flex-end;padding-right:1px"><span>###########</span></div>
<div class="t" style="left:15px;top:306px;width:65px;justify-content:flex-start;padding-left:1px"><span>2028</span></div>
<div class="t" style="left:81px;top:306px;width:73px;justify-content:flex-end;padding-right:1px"><span>11,248,297</span></div>
<div class="t" style="left:155px;top:306px;width:63px;justify-content:flex-end;padding-right:1px"><span>8,923,379</span></div>
<div class="t" style="left:219px;top:306px;width:57px;justify-content:flex-end;padding-right:1px"><span>2,324,918<span class="p">)</span></span></div>
<div class="t" style="left:277px;top:306px;width:52px;justify-content:flex-end;padding-right:1px"><span>1,129,255,778<span class="p">)</span></span></div>
<div class="t" style="left:330px;top:306px;width:47px;justify-content:flex-end;padding-right:1px"><span>227,709,877<span class="p">)</span></span></div>
<div class="t" style="left:378px;top:306px;width:63px;justify-content:flex-end;padding-right:1px"><span>1,379,696,327<span class="p">)</span></span></div>
<div class="t" style="left:442px;top:306px;width:51px;justify-content:flex-end;padding-right:1px"><span>292,925,455<span class="p">)</span></span></div>
<div class="t" style="left:494px;top:306px;width:46px;justify-content:flex-end;padding-right:1px"><span>##########</span></div>
<div class="t" style="left:541px;top:306px;width:44px;justify-content:flex-end;padding-right:1px"><span>(65,215,578)</span></div>
<div class="t red" style="left:586px;top:306px;width:53px;justify-content:flex-end;padding-right:1px"><span>($62,610,137)</span></div>
<div class="t red" style="left:640px;top:306px;width:42px;justify-content:flex-end;padding-right:1px"><span>##########</span></div>
<div class="t red" style="left:683px;top:306px;width:46px;justify-content:flex-end;padding-right:1px"><span>(29,086,148)</span></div>
<div class="t red" style="left:730px;top:306px;width:49px;justify-content:flex-end;padding-right:1px"><span>###########</span></div>
<div class="t" style="left:15px;top:315px;width:65px;justify-content:flex-start;padding-left:1px"><span>2029</span></div>
<div class="t" style="left:81px;top:315px;width:73px;justify-content:flex-end;padding-right:1px"><span>10,798,365</span></div>
<div class="t" style="left:155px;top:315px;width:63px;justify-content:flex-end;padding-right:1px"><span>8,566,444</span></div>
<div class="t" style="left:219px;top:315px;width:57px;justify-content:flex-end;padding-right:1px"><span>2,231,921<span class="p">)</span></span></div>
<div class="t" style="left:277px;top:315px;width:52px;justify-content:flex-end;padding-right:1px"><span>1,084,085,535<span class="p">)</span></span></div>
<div class="t" style="left:330px;top:315px;width:47px;justify-content:flex-end;padding-right:1px"><span>218,601,479<span class="p">)</span></span></div>
<div class="t" style="left:378px;top:315px;width:63px;justify-content:flex-end;padding-right:1px"><span>1,367,153,633<span class="p">)</span></span></div>
<div class="t" style="left:442px;top:315px;width:51px;justify-content:flex-end;padding-right:1px"><span>291,047,727<span class="p">)</span></span></div>
<div class="t" style="left:494px;top:315px;width:46px;justify-content:flex-end;padding-right:1px"><span>##########</span></div>
<div class="t" style="left:541px;top:315px;width:44px;justify-content:flex-end;padding-right:1px"><span>(72,446,248)</span></div>
<div class="t red" style="left:586px;top:315px;width:53px;justify-content:flex-end;padding-right:1px"><span>($70,767,024)</span></div>
<div class="t red" style="left:640px;top:315px;width:42px;justify-content:flex-end;padding-right:1px"><span>##########</span></div>
<div class="t red" style="left:683px;top:315px;width:46px;justify-content:flex-end;padding-right:1px"><span>(32,311,027)</span></div>
<div class="t red" style="left:730px;top:315px;width:49px;justify-content:flex-end;padding-right:1px"><span>###########</span></div>
<div class="t" style="left:15px;top:324px;width:65px;justify-content:flex-start;padding-left:1px"><span>2030</span></div>
<div class="t" style="left:81px;top:324px;width:73px;justify-content:flex-end;padding-right:1px"><span>10,348,433</span></div>
<div class="t" style="left:155px;top:324px;width:63px;justify-content:flex-end;padding-right:1px"><span>8,209,509</span></div>
<div class="t" style="left:219px;top:324px;width:57px;justify-content:flex-end;padding-right:1px"><span>2,138,924<span class="p">)</span></span></div>
<div class="t" style="left:277px;top:324px;width:52px;justify-content:flex-end;padding-right:1px"><span>1,038,915,292<span class="p">)</span></span></div>
<div class="t" style="left:330px;top:324px;width:47px;justify-content:flex-end;padding-right:1px"><span>209,493,082<span class="p">)</span></span></div>
<div class="t" style="left:378px;top:324px;width:63px;justify-content:flex-end;padding-right:1px"><span>1,352,520,490<span class="p">)</span></span></div>
<div class="t" style="left:442px;top:324px;width:51px;justify-content:flex-end;padding-right:1px"><span>287,292,273<span class="p">)</span></span></div>
<div class="t" style="left:494px;top:324px;width:46px;justify-content:flex-end;padding-right:1px"><span>##########</span></div>
<div class="t" style="left:541px;top:324px;width:44px;justify-content:flex-end;padding-right:1px"><span>(77,799,191)</span></div>
<div class="t red" style="left:586px;top:324px;width:53px;justify-content:flex-end;padding-right:1px"><span>($78,401,300)</span></div>
<div class="t red" style="left:640px;top:324px;width:42px;justify-content:flex-end;padding-right:1px"><span>##########</span></div>
<div class="t red" style="left:683px;top:324px;width:46px;justify-content:flex-end;padding-right:1px"><span>(34,698,439)</span></div>
<div class="t red" style="left:730px;top:324px;width:49px;justify-content:flex-end;padding-right:1px"><span>###########</span></div>
<div class="t" style="left:15px;top:333px;width:65px;justify-content:flex-start;padding-left:1px"><span>2031</span></div>
<div class="t" style="left:81px;top:333px;width:73px;justify-content:flex-end;padding-right:1px"><span>9,898,501</span></div>
<div class="t" style="left:155px;top:333px;width:63px;justify-content:flex-end;padding-right:1px"><span>7,852,573</span></div>
<div class="t" style="left:219px;top:333px;width:57px;justify-content:flex-end;padding-right:1px"><span>2,045,928<span class="p">)</span></span></div>
<div class="t" style="left:277px;top:333px;width:52px;justify-content:flex-end;padding-right:1px"><span>993,745,049<span class="p">)</span></span></div>
<div class="t" style="left:330px;top:333px;width:47px;justify-content:flex-end;padding-right:1px"><span>200,384,684<span class="p">)</span></span></div>
<div class="t" style="left:378px;top:333px;width:63px;justify-content:flex-end;padding-right:1px"><span>1,342,068,245<span class="p">)</span></span></div>
<div class="t" style="left:442px;top:333px;width:51px;justify-content:flex-end;padding-right:1px"><span>285,414,545<span class="p">)</span></span></div>
<div class="t" style="left:494px;top:333px;width:46px;justify-content:flex-end;padding-right:1px"><span>##########</span></div>
<div class="t" style="left:541px;top:333px;width:44px;justify-content:flex-end;padding-right:1px"><span>(85,029,861)</span></div>
<div class="t red" style="left:586px;top:333px;width:53px;justify-content:flex-end;padding-right:1px"><span>($87,080,799)</span></div>
<div class="t red" style="left:640px;top:333px;width:42px;justify-content:flex-end;padding-right:1px"><span>##########</span></div>
<div class="t red" style="left:683px;top:333px;width:46px;justify-content:flex-end;padding-right:1px"><span>(37,923,318)</span></div>
<div class="t red" style="left:730px;top:333px;width:49px;justify-content:flex-end;padding-right:1px"><span>###########</span></div>
<div class="t" style="left:15px;top:342px;width:65px;justify-content:flex-start;padding-left:1px"><span>2032</span></div>
<div class="t" style="left:81px;top:342px;width:73px;justify-content:flex-end;padding-right:1px"><span>9,448,569</span></div>
<div class="t" style="left:155px;top:342px;width:63px;justify-content:flex-end;padding-right:1px"><span>7,495,638</span></div>
<div class="t" style="left:219px;top:342px;width:57px;justify-content:flex-end;padding-right:1px"><span>1,952,931<span class="p">)</span></span></div>
<div class="t" style="left:277px;top:342px;width:52px;justify-content:flex-end;padding-right:1px"><span>948,574,805<span class="p">)</span></span></div>
<div class="t" style="left:330px;top:342px;width:47px;justify-content:flex-end;padding-right:1px"><span>191,276,287<span class="p">)</span></span></div>
<div class="t" style="left:378px;top:342px;width:63px;justify-content:flex-end;padding-right:1px"><span>1,329,525,551<span class="p">)</span></span></div>
<div class="t" style="left:442px;top:342px;width:51px;justify-content:flex-end;padding-right:1px"><span>283,536,818<span class="p">)</span></span></div>
<div class="t" style="left:494px;top:342px;width:46px;justify-content:flex-end;padding-right:1px"><span>##########</span></div>
<div class="t" style="left:541px;top:342px;width:44px;justify-content:flex-end;padding-right:1px"><span>(92,260,531)</span></div>
<div class="t red" style="left:586px;top:342px;width:53px;justify-content:flex-end;padding-right:1px"><span>($95,237,686)</span></div>
<div class="t red" style="left:640px;top:342px;width:42px;justify-content:flex-end;padding-right:1px"><span>##########</span></div>
<div class="t red" style="left:683px;top:342px;width:46px;justify-content:flex-end;padding-right:1px"><span>(41,148,197)</span></div>
<div class="t red" style="left:730px;top:342px;width:49px;justify-content:flex-end;padding-right:1px"><span>###########</span></div>
<div class="t" style="left:378px;top:351px;width:63px;justify-content:flex-end;padding-right:1px"><span>92.71%</span></div>
<div class="t" style="left:442px;top:351px;width:51px;justify-content:flex-end;padding-right:1px"><span>98.05%</span></div>
<div class="t red" style="left:586px;top:360px;width:53px;justify-content:flex-end;padding-right:1px"><span>(583,226,486)</span></div>
<div class="t red" style="left:640px;top:360px;width:42px;justify-content:flex-end;padding-right:1px"><span>##########</span></div>
<div class="t red" style="left:683px;top:360px;width:46px;justify-content:flex-end;padding-right:1px"><span>(259,662,688)</span></div>
<div class="t red" style="left:730px;top:360px;width:49px;justify-content:flex-end;padding-right:1px"><span>###########</span></div>
<div class="t" style="left:81px;top:378px;width:73px;justify-content:flex-end;padding-right:1px"><span>Emissions budget</span></div>
<div class="t" style="left:81px;top:387px;width:73px;justify-content:flex-end;padding-right:1px"><span>Metric Tons of CO2</span></div>
<div class="t" style="left:155px;top:378px;width:63px;justify-content:flex-end;padding-right:1px"><span>Average Auction </span></div>
<div class="t" style="left:155px;top:387px;width:63px;justify-content:flex-end;padding-right:1px"><span>Price/Mton CO2</span></div>
<div class="t" style="left:219px;top:378px;width:57px;justify-content:flex-end;padding-right:1px"><span>Total Revenue</span></div>
<div class="t" style="left:219px;top:387px;width:57px;justify-content:flex-end;padding-right:1px"><span>from Auctions</span></div>
<div class="t" style="left:277px;top:378px;width:52px;justify-content:flex-end;padding-right:1px"><span>45% for Spec</span></div>
<div class="t" style="left:277px;top:387px;width:52px;justify-content:flex-end;padding-right:1px"><span>Trans Fund</span></div>
<div class="t" style="left:330px;top:378px;width:47px;justify-content:flex-end;padding-right:1px"><span>Net to STF</span></div>
<div class="t" style="left:330px;top:387px;width:47px;justify-content:flex-end;padding-right:1px"><span>ess loss tax $</span></div>
<div class="t" style="left:15px;top:387px;width:65px;justify-content:flex-start;padding-left:1px"><span>TCI Auction Revenue</span></div>
<div class="t" style="left:15px;top:396px;width:65px;justify-content:flex-start;padding-left:1px"><span>2023</span></div>
<div class="t" style="left:81px;top:396px;width:73px;justify-content:flex-end;padding-right:1px"><span>13,497,957</span></div>
<div class="t" style="left:155px;top:396px;width:63px;justify-content:flex-end;padding-right:1px"><span>$9.25</span></div>
<div class="t" style="left:219px;top:396px;width:57px;justify-content:flex-end;padding-right:1px"><span>$124,856,102</span></div>
<div class="t" style="left:277px;top:396px;width:52px;justify-content:flex-end;padding-right:1px"><span>$56,185,246</span></div>
<div class="t" style="left:330px;top:396px;width:47px;justify-content:flex-end;padding-right:1px"><span>$15,788,836<span class="p">)</span></span></div>
<div class="t" style="left:15px;top:405px;width:65px;justify-content:flex-start;padding-left:1px"><span>2024</span></div>
<div class="t" style="left:81px;top:405px;width:73px;justify-content:flex-end;padding-right:1px"><span>13,048,025</span></div>
<div class="t" style="left:155px;top:405px;width:63px;justify-content:flex-end;padding-right:1px"><span>$10.21</span></div>
<div class="t" style="left:219px;top:405px;width:57px;justify-content:flex-end;padding-right:1px"><span>$133,155,095</span></div>
<div class="t" style="left:277px;top:405px;width:52px;justify-content:flex-end;padding-right:1px"><span>$59,919,793</span></div>
<div class="t red" style="left:330px;top:405px;width:47px;justify-content:flex-end;padding-right:1px"><span>($2,621,255)</span></div>
<div class="t" style="left:15px;top:414px;width:65px;justify-content:flex-start;padding-left:1px"><span>2025</span></div>
<div class="t" style="left:81px;top:414px;width:73px;justify-content:flex-end;padding-right:1px"><span>12,598,093</span></div>
<div class="t" style="left:155px;top:414px;width:63px;justify-content:flex-end;padding-right:1px"><span>$11.27</span></div>
<div class="t" style="left:219px;top:414px;width:57px;justify-content:flex-end;padding-right:1px"><span>$141,917,518</span></div>
<div class="t" style="left:277px;top:414px;width:52px;justify-content:flex-end;padding-right:1px"><span>$63,862,883</span></div>
<div class="t red" style="left:330px;top:414px;width:47px;justify-content:flex-end;padding-right:1px"><span>($18,221,855)</span></div>
<div class="t" style="left:15px;top:423px;width:65px;justify-content:flex-start;padding-left:1px"><span>2026</span></div>
<div class="t" style="left:81px;top:423px;width:73px;justify-content:flex-end;padding-right:1px"><span>12,148,161</span></div>
<div class="t" style="left:155px;top:423px;width:63px;justify-content:flex-end;padding-right:1px"><span>$12.44</span></div>
<div class="t" style="left:219px;top:423px;width:57px;justify-content:flex-end;padding-right:1px"><span>$151,123,123</span></div>
<div class="t" style="left:277px;top:423px;width:52px;justify-content:flex-end;padding-right:1px"><span>$68,005,405</span></div>
<div class="t red" style="left:330px;top:423px;width:47px;justify-content:flex-end;padding-right:1px"><span>($32,785,556)</span></div>
<div class="t" style="left:15px;top:432px;width:65px;justify-content:flex-start;padding-left:1px"><span>2027</span></div>
<div class="t" style="left:81px;top:432px;width:73px;justify-content:flex-end;padding-right:1px"><span>11,698,229</span></div>
<div class="t" style="left:155px;top:432px;width:63px;justify-content:flex-end;padding-right:1px"><span>$13.73</span></div>
<div class="t" style="left:219px;top:432px;width:57px;justify-content:flex-end;padding-right:1px"><span>$160,616,684</span></div>
<div class="t" style="left:277px;top:432px;width:52px;justify-content:flex-end;padding-right:1px"><span>$72,277,508</span></div>
<div class="t red" style="left:330px;top:432px;width:47px;justify-content:flex-end;padding-right:1px"><span>($45,500,469)</span></div>
<div class="t" style="left:15px;top:441px;width:65px;justify-content:flex-start;padding-left:1px"><span>2028</span></div>
<div class="t" style="left:81px;top:441px;width:73px;justify-content:flex-end;padding-right:1px"><span>11,248,297</span></div>
<div class="t" style="left:155px;top:441px;width:63px;justify-content:flex-end;padding-right:1px"><span>$15.17</span></div>
<div class="t" style="left:219px;top:441px;width:57px;justify-content:flex-end;padding-right:1px"><span>$170,580,424</span></div>
<div class="t" style="left:277px;top:441px;width:52px;justify-content:flex-end;padding-right:1px"><span>$76,761,191</span></div>
<div class="t red" style="left:330px;top:441px;width:47px;justify-content:flex-end;padding-right:1px"><span>($57,959,528)</span></div>
<div class="t" style="left:15px;top:450px;width:65px;justify-content:flex-start;padding-left:1px"><span>2029</span></div>
<div class="t" style="left:81px;top:450px;width:73px;justify-content:flex-end;padding-right:1px"><span>10,798,365</span></div>
<div class="t" style="left:155px;top:450px;width:63px;justify-content:flex-end;padding-right:1px"><span>$16.76</span></div>
<div class="t" style="left:219px;top:450px;width:57px;justify-content:flex-end;padding-right:1px"><span>$180,926,606</span></div>
<div class="t" style="left:277px;top:450px;width:52px;justify-content:flex-end;padding-right:1px"><span>$81,416,973</span></div>
<div class="t red" style="left:330px;top:450px;width:47px;justify-content:flex-end;padding-right:1px"><span>($70,290,762)</span></div>
<div class="t" style="left:15px;top:459px;width:65px;justify-content:flex-start;padding-left:1px"><span>2030</span></div>
<div class="t" style="left:81px;top:459px;width:73px;justify-content:flex-end;padding-right:1px"><span>10,348,433</span></div>
<div class="t" style="left:155px;top:459px;width:63px;justify-content:flex-end;padding-right:1px"><span>$18.51</span></div>
<div class="t" style="left:219px;top:459px;width:57px;justify-content:flex-end;padding-right:1px"><span>$191,549,495</span></div>
<div class="t" style="left:277px;top:459px;width:52px;justify-content:flex-end;padding-right:1px"><span>$86,197,273</span></div>
<div class="t red" style="left:330px;top:459px;width:47px;justify-content:flex-end;padding-right:1px"><span>($80,778,271)</span></div>
<div class="t" style="left:15px;top:468px;width:65px;justify-content:flex-start;padding-left:1px"><span>2031</span></div>
<div class="t" style="left:81px;top:468px;width:73px;justify-content:flex-end;padding-right:1px"><span>9,898,501</span></div>
<div class="t" style="left:155px;top:468px;width:63px;justify-content:flex-end;padding-right:1px"><span>$19.83</span></div>
<div class="t" style="left:219px;top:468px;width:57px;justify-content:flex-end;padding-right:1px"><span>$196,287,275</span></div>
<div class="t" style="left:277px;top:468px;width:52px;justify-content:flex-end;padding-right:1px"><span>$88,329,274</span></div>
<div class="t red" style="left:330px;top:468px;width:47px;justify-content:flex-end;padding-right:1px"><span>($96,515,027)</span></div>
<div class="t" style="left:15px;top:477px;width:65px;justify-content:flex-start;padding-left:1px"><span>2032</span></div>
<div class="t" style="left:81px;top:477px;width:73px;justify-content:flex-end;padding-right:1px"><span>9,448,569</span></div>
<div class="t" style="left:155px;top:477px;width:63px;justify-content:flex-end;padding-right:1px"><span>$21.23</span></div>
<div class="t" style="left:219px;top:477px;width:57px;justify-content:flex-end;padding-right:1px"><span>$200,593,120</span></div>
<div class="t" style="left:277px;top:477px;width:52px;justify-content:flex-end;padding-right:1px"><span>$90,266,904</span></div>
<div class="t red" style="left:330px;top:477px;width:47px;justify-content:flex-end;padding-right:1px"><span>###########</span></div>
<div class="t" style="left:219px;top:495px;width:57px;justify-content:flex-end;padding-right:1px"><span>$1,651,605,441</span></div>
<div class="t" style="left:277px;top:495px;width:52px;justify-content:flex-end;padding-right:1px"><span>$743,222,449</span></div>
<div class="t red" style="left:330px;top:495px;width:47px;justify-content:flex-end;padding-right:1px"><span>###########</span></div>
<div class="t" style="left:378px;top:495px;width:63px;justify-content:flex-start;padding-left:1px;overflow:visible"><span>Total Net to STF</span></div>
<div class="t" style="left:640px;top:387px;width:42px;justify-content:flex-start;padding-left:1px;overflow:visible"><span>*Uses an avg. wholesale price of $1.97</span></div>
<div class="t" style="left:640px;top:396px;width:42px;justify-content:flex-start;padding-left:1px;overflow:visible"><span>over the past 5 years</span></div>
</body></html>
